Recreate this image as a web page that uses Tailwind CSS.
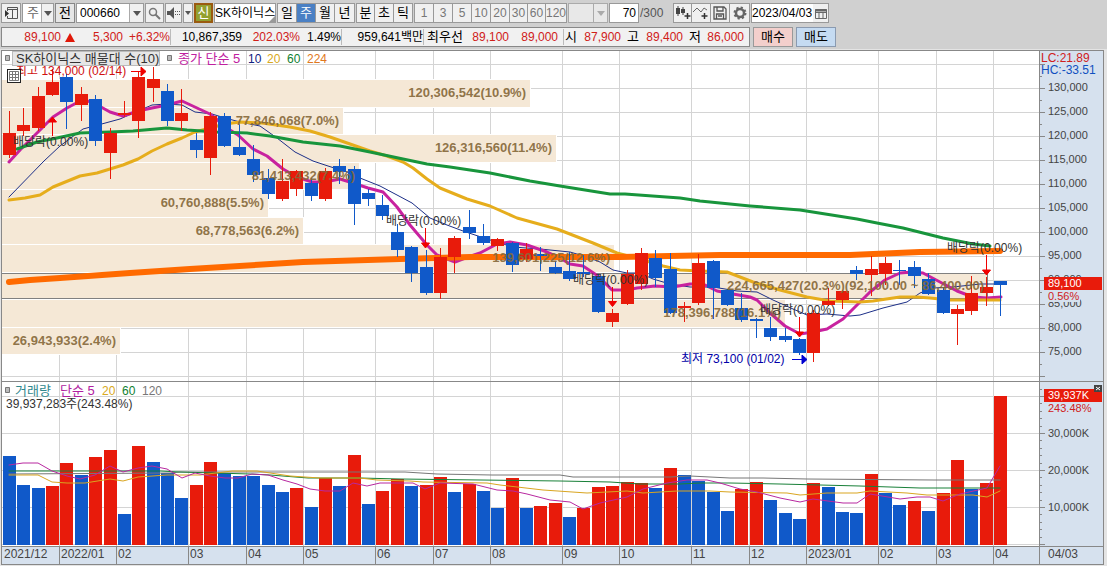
<!DOCTYPE html>
<html lang="ko">
<head>
<meta charset="utf-8">
<title>SK하이닉스 주봉 차트</title>
<script src="https://cdn.jsdelivr.net/npm/@tailwindcss/browser@4"></script>
</head>
<body class="bg-[#d0d0d0] font-['Liberation_Sans','Noto_Sans_CJK_KR',sans-serif] text-[12px] leading-4 text-black">
<header class="flex flex-col gap-1 px-px pt-[3px]">
  <div class="flex h-5 items-stretch gap-px whitespace-nowrap" role="toolbar" aria-label="차트 도구">
    <button aria-label="메뉴" class="grid w-5 place-items-center border border-[#999] bg-[#f0f0f0]">
      <svg width="15" height="14" viewBox="0 0 15 14" fill="none" stroke="#555"><path d="M3.5 5V1.500H13.500V12.500H3.500V10M3.500 3.500H13.500M8.500 3.500V12.500"/><path d="M1 4l4 3.500-4 3.500z" fill="#333" stroke="none"/></svg>
    </button>
    <div class="relative flex w-8 border border-[#999] bg-white">
      <select aria-label="구분" class="w-full appearance-none pl-1 text-[13px] leading-4 text-[#666]"><option>주</option></select>
      <span class="pointer-events-none absolute inset-y-0 right-0 grid w-3 place-items-center border-l border-[#aaa] bg-[#f0f0f0]"><svg width="8" height="5"><path d="M0 0h8L4 5z" fill="#555"/></svg></span>
    </div>
    <button class="w-5 border border-[#888] bg-[#e6e6e6] text-[13px]">전</button>
    <div class="relative flex w-[68px] border border-[#999] bg-white">
      <input aria-label="종목코드" value="000660" class="w-full px-[3px] text-[12px]">
      <span class="absolute inset-y-0 right-0 grid w-[14px] place-items-center border-l border-[#aaa] bg-[#f0f0f0]"><svg width="8" height="5"><path d="M0 0h8L4 5z" fill="#555"/></svg></span>
    </div>
    <button aria-label="검색" class="grid w-[19px] place-items-center border border-[#999] bg-[#f0f0f0]"><svg width="13" height="13" fill="none" stroke="#777" stroke-width="1.500"><circle cx="5" cy="5" r="3.500"/><path d="M7.500 7.500l4.500 4.500" stroke-width="2"/></svg></button>
    <button aria-label="소리" class="grid w-[17px] place-items-center border border-[#999] bg-[#f0f0f0]"><svg width="13" height="12"><path d="M0 4h3l4-4v12L3 8H0z" fill="#555"/><path d="M8 4h1v1H8zM8 7h1v1H8zM10 4h1v1h-1zM10 7h1v1h-1zM12 4h1v1h-1zM12 7h1v1h-1z" fill="#555"/></svg></button>
    <button aria-label="소리 옵션" class="grid w-[10px] place-items-center border border-[#999] bg-[#f0f0f0]"><svg width="6" height="4"><path d="M0 0h6L3 4z" fill="#555"/></svg></button>
    <button class="w-[19px] border-2 border-[#9a5a10] bg-[#92a030] text-[13px] leading-4 text-white">신</button>
    <div class="relative flex w-[62px] items-center overflow-hidden border border-[#999] bg-white">
      <input aria-label="종목명" value="SK하이닉스" class="w-20 shrink-0 text-[12px]">
      <svg class="absolute right-0 bottom-0" width="6" height="6"><path d="M6 0v6H0z" fill="#999"/></svg>
    </div>
    <div class="flex divide-x divide-[#999] border border-[#999] bg-[#f0f0f0] text-[13px]">
      <button class="w-[19px]">일</button><button class="w-[19px] bg-[#4a80c4] text-white">주</button><button class="w-[19px]">월</button><button class="w-[19px]">년</button>
    </div>
    <div class="flex divide-x divide-[#999] border border-[#999] bg-[#f0f0f0] text-[13px]">
      <button class="w-[18px]">분</button><button class="w-[19px]">초</button><button class="w-[18px]">틱</button>
    </div>
    <div class="flex divide-x divide-[#999] border border-[#999] bg-[#f0f0f0] text-[#777]">
      <button class="w-[19px]">1</button><button class="w-[19px]">3</button><button class="w-[19px]">5</button><button class="w-[19px]">10</button><button class="w-[19px]">20</button><button class="w-[18px]">30</button><button class="w-[18px]">60</button><button class="w-[20px]">120</button>
    </div>
    <div class="relative flex w-10 border border-[#aaa] bg-[#e8e8e8]">
      <select aria-label="분 주기" disabled class="w-full appearance-none"><option></option></select>
      <span class="pointer-events-none absolute inset-y-0 right-0 grid w-[14px] place-items-center border-l border-[#aaa]"><svg width="8" height="5"><path d="M0 0h8L4 5z" fill="#aaa"/></svg></span>
    </div>
    <label class="flex items-center gap-px"><input aria-label="표시 봉 수" value="70" class="h-5 w-[30px] border border-[#999] bg-white pr-[2px] text-right text-[12px]"><span class="w-8 text-[#555]">/300</span></label>
    <div class="flex divide-x divide-[#999] border border-[#999] bg-[#f0f0f0]">
      <button aria-label="봉 추가" class="grid w-[18px] place-items-center"><svg width="16" height="14"><path d="M3 0v10M8 1v8" stroke="#444"/><path d="M1 2h4v6H1zM6 3h4v4H6z" fill="#444"/><path d="M12.500 7v6M9.500 10h6" stroke="#333" stroke-width="1.500"/></svg></button>
      <button aria-label="지표 추가" class="grid w-[19px] place-items-center"><svg width="16" height="14" fill="none" stroke="#666"><path d="M0 6l4-4 4 4 3-4 3 2"/><path d="M11.500 7v6M8.500 10h6" stroke="#333" stroke-width="1.500"/></svg></button>
      <button aria-label="저장" class="grid w-[19px] place-items-center"><svg width="14" height="14" fill="none" stroke="#555" stroke-width="1.300"><path d="M1 1h10l2 2v10H1zM4 1v4h6V1M3.500 13V8h7v5M5 10h4"/></svg></button>
      <button aria-label="설정" class="grid w-[19px] place-items-center"><svg width="14" height="14" fill="none" stroke="#666"><circle cx="7" cy="7" r="4" stroke-width="2.500"/><circle cx="7" cy="7" r="5.500" stroke-width="2" stroke-dasharray="2.200 2.120"/></svg></button>
    </div>
    <div class="flex border border-[#999] bg-white"><input aria-label="날짜" value="2023/04/03" class="w-[61px] text-[12px]"><button aria-label="달력" class="grid w-[15px] place-items-center bg-[#f0f0f0]"><svg width="12" height="11" fill="none" stroke="#666"><path d="M.5 1.500h11v9H.5zM.5 4.500h11M4 4.500v6M8 4.500v6"/><path d="M0 2.500h12" stroke-width="2"/></svg></button></div>
  </div>

  <div class="flex h-5 gap-[3px] whitespace-nowrap">
    <div class="flex items-center border border-[#888] bg-[#f1f1f1] text-right text-[#d02018]">
      <span class="w-[59px]">89,100</span><svg class="ml-1" width="10" height="9"><path d="M5 0l5 9H0z" fill="#e01808"/></svg><span class="w-12">5,300</span><span class="w-12 border-r border-[#bbb]">+6.32%</span>
      <span class="w-[71px] text-black">10,867,359</span><span class="w-[58px]">202.03%</span><span class="w-[42px] border-r border-[#bbb] text-black">1.49%</span>
      <span class="w-[82px] border-r border-[#bbb] text-black">959,641백만</span>
      <span class="w-[39px] text-[13px] text-black">최우선</span><span class="w-[46px]">89,100</span><span class="w-[55px] border-r border-[#bbb] pr-[5px]">89,000</span>
      <span class="w-[13px] text-[13px] text-black">시</span><span class="w-11">87,900</span><span class="w-[18px] text-[13px] text-black">고</span><span class="w-11">89,400</span><span class="w-[18px] text-[13px] text-black">저</span><span class="w-12 pr-[5px]">86,000</span>
    </div>
    <button class="w-10 border border-[#999] bg-[#f3cfcc] text-[13px]">매수</button>
    <button class="w-10 border border-[#8a9ab0] bg-[#c5dbf2] text-[13px]">매도</button>
  </div>
</header>

<main class="pt-0.5">
<svg id="chart" class="block h-auto w-full" viewBox="0 49 1107 517" role="img" aria-label="SK하이닉스 주봉 가격 및 거래량">
  <rect y="49" width="1107" height="517" fill="#e4e4e4"/>
  <g shape-rendering="crispEdges">
    <rect x="1" y="50" width="1103" height="515" fill="#888"/>
    <rect x="2" y="51" width="1037" height="330" fill="#fff"/>
    <rect x="2" y="382" width="1037" height="164" fill="#fff"/>
    <rect x="1040" y="51" width="63" height="330" fill="#d6e1ee"/>
    <rect x="1040" y="382" width="63" height="164" fill="#d6e1ee"/>
    <rect x="2" y="547" width="1101" height="17" fill="#d6e1ee"/>
    <g id="grid"></g>
    <g id="bands" fill="#f5e8d6"></g>
    <path d="M2 273.500H987V298.500H2" fill="none" stroke="#808080"/>
  </g>
  <g id="volume" shape-rendering="crispEdges"></g>
  <g id="averages" fill="none" stroke-linejoin="round" stroke-linecap="round"></g>
  <g id="candles" shape-rendering="crispEdges"></g>
  <g id="bandText" fill="#86693a" fill-opacity=".92" font-weight="bold" font-size="13" text-anchor="end"></g>

  <g id="arrows" fill="#f00000" stroke="#f00000">
    <path d="M52.500 117l4 5h-8zM52.500 122v14"/>
    <path d="M425.500 228v15M421.500 243h8l-4 5z"/>
    <path d="M612.500 287v15M608.500 301.500h8l-4 5z"/>
    <path d="M799.500 317v15M795.500 332h8l-4 5z"/>
    <path d="M986.500 255v15M982.500 270h8l-4 5z"/>
    <path d="M131 71.500h10M141 67l5 4.500-5 4.500z"/>
    <path d="M792 359.500h10M802 355l5 4.500-5 4.500z" fill="#0000d0" stroke="#0000d0"/>
  </g>
  <g font-size="12" fill="#333">
    <text x="13" y="146">배당락(0.00%)</text>
    <text x="386" y="225">배당락(0.00%)</text>
    <text x="573" y="284">배당락(0.00%)</text>
    <text x="760" y="314">배당락(0.00%)</text>
    <text x="947" y="252">배당락(0.00%)</text>
    <text x="16" y="75" fill="#d01010">최고 134,000 (02/14)</text>
    <text x="681" y="363" fill="#0000a8">최저 73,100 (01/02)</text>
    <text x="6" y="408">39,937,283주(243.48%)</text>
  </g>
  <rect x="7.500" y="69.500" width="13" height="13" fill="#fff" stroke="#222"/>
  <path d="M9.500 71.500h9v9h-9zM9.500 74.500h9M9.500 77.500h9M12.500 71.500v9M15.500 71.500v9" fill="none" stroke="#777"/>

  <g font-size="13">
    <rect x="12.500" y="51.500" width="147" height="14" fill="#e6e6e6" stroke="#bbb"/>
    <path d="M5.500 55.500h4v5h-4zM167.500 55.500h4v5h-4zM5.500 387.500h4v5h-4z" fill="#bbb" stroke="#777"/>
    <text x="16" y="63" fill="#333">SK하이닉스 매물대 수(10)</text>
    <text x="178" y="63" fill="#c020a0">종가 단순 5</text>
    <text x="15" y="395" fill="#30888e">거래량</text>
    <text x="60" y="395" fill="#b020a0">단순 5</text>
  </g>
  <g font-size="12">
    <text x="248" y="63" fill="#102080">10</text><text x="267" y="63" fill="#d8a820">20</text><text x="287" y="63" fill="#108030">60</text><text x="307" y="63" fill="#e07820">224</text>
    <text x="102" y="395" fill="#d8a820">20</text><text x="122" y="395" fill="#108030">60</text><text x="142" y="395" fill="#777">120</text>
    <text x="1041" y="62" fill="#d02020">LC:21.89</text><text x="1041" y="74" fill="#1050c0">HC:-33.51</text>
  </g>
  <g id="axis" fill="#444"></g>
  <g font-size="11">
    <rect x="1044" y="277" width="58" height="13" fill="#e81b0b"/><text x="1048" y="287" fill="#fff">89,100</text>
    <rect x="1046" y="290" width="34" height="12" fill="#d6e1ee"/><text x="1048" y="300" fill="#d02020">0.56%</text>
    <rect x="1044" y="389" width="58" height="13" fill="#e81b0b"/><text x="1048" y="399" fill="#fff">39,937K</text>
    <text x="1048" y="412" fill="#d02020">243.48%</text>
    <rect x="1094" y="385" width="8" height="7" fill="#444"/><path d="M1096 387l4 3M1100 387l-4 3" stroke="#fff"/>
  </g>
</svg>
</main>

<script>
const RED = '#e81b0b', BLUE = '#1059c9';
const put = (id, html) => { document.getElementById(id).innerHTML = html; };
const months = [[4,'2021/12'],[60,'2022/01'],[117,'02'],[189,'03'],[247,'04'],[304,'05'],[376,'06'],[434,'07'],[491,'08'],[563,'09'],[620,'10'],[692,'11'],[750,'12'],[807,'2023/01'],[879,'02'],[937,'03'],[994,'04']];
const priceY = k => 232 + (100 - k) * 4.81;

let grid = '', axis = '';
for (let k = 135; k >= 70; k -= 5) {
  const y = Math.round(priceY(k));
  grid += `<rect x="2" y="${y}" width="1037" height="1" fill="#d4d4d4"/><rect x="1040" y="${y}" width="5" height="1" fill="#888"/>`;
  if (k > 70) grid += `<rect x="1040" y="${y + 12}" width="2" height="1" fill="#888"/>`;
  if (k < 135 && k > 70) axis += `<text x="1048" y="${y + 3}" font-size="11">${k},000</text>`;
}
for (let v = 0; v <= 40; v += 10) {
  const y = Math.round(544 - v * 3.7);
  grid += `<rect x="2" y="${y}" width="1037" height="1" fill="#d4d4d4"/>`;
  if (v > 0 && v < 40) axis += `<text x="1048" y="${y + 4}" font-size="11">${v},000K</text>`;
}
for (let j = 0; j <= 21; j++) grid += `<rect x="1040" y="${Math.round(544 - j * 7.4)}" width="${j % 5 ? 2 : 5}" height="1" fill="#888"/>`;
months.forEach(([x, t], i) => {
  if (i) grid += `<rect x="${x - 1}" y="51" width="1" height="330" fill="#d4d4d4"/><rect x="${x - 1}" y="382" width="1" height="164" fill="#d4d4d4"/><rect x="${x - 1}" y="546" width="1" height="18" fill="#888"/>`;
  axis += `<text x="${i ? x + 1 : x}" y="558" font-size="12">${t}</text>`;
});
grid += '<rect x="1039" y="546" width="1" height="18" fill="#888"/>';
axis += '<text x="1048" y="558" font-size="12">04/03</text>';
put('grid', grid);
put('axis', axis);

/* volume-by-price: top, bottom, right edge, text end, text */
const bands = [[80,107,530,526,'120,306,542(10.9%)'],[108,134,343,339,'77,846,068(7.0%)'],[135,162,556,552,'126,316,560(11.4%)'],[163,189,359,355,'81,413,432(7.4%)'],[190,217,268,264,'60,760,888(5.5%)'],[218,244,303,299,'68,778,563(6.2%)'],[245,272,614,610,'139,601,225(12.6%)'],[273,299,987,984,'224,665,427(20.3%)(92,100.00 ~ 86,400.00)'],[300,327,785,781,'178,396,788(16.1%)'],[328,354,120,116,'26,943,933(2.4%)']];
put('bands', bands.map(b => `<rect x="2" y="${b[0] - 1}" width="${b[2] - 1}" height="${b[1] - b[0] + 2}" fill="#fff"/><rect x="2" y="${b[0]}" width="${b[2] - 2}" height="${b[1] - b[0]}"/>`).join(''));
put('bandText', bands.map(b => `<text x="${b[3]}" y="${b[0] + 17}">${b[4]}</text>`).join(''));

/* weekly candles: direction, high, body top, body bottom, low, volume top */
const weeks = `R 111 133 155 158 456b|R 108 125 131 136 485b|R 87 96 128 131 488b|R 69 82 95 96 486|B 74 77 102 129 463r|R 87 94 105 121 475b|B 95 99 141 146 457r|R 128 133 153 179 450|R 101 113 115 117 514b|R 72 77 121 138 446|R 67 79 88 102 462b|B 84 91 121 126 473|R 89 113 121 131 498b|B 133 140 150 158 485r|R 112 116 158 175 462|B 113 116 146 147 473|B 124 147 155 156 476|B 145 159 175 182 476|B 169 178 194 199 485|R 159 181 199 201 492b|R 170 171 189 196 488|B 178 183 196 201 507|R 168 171 199 201 478|B 159 166 172 184 486|B 166 169 204 225 455r|B 189 193 199 206 504|B 195 205 216 220 491r|B 224 232 250 257 479r|B 246 247 273 282 486|B 250 267 293 295 485r|R 248 257 293 299 477|R 236 238 257 273 492b|B 210 227 233 239 484r|B 224 236 243 245 491|R 238 239 246 251 508b|B 242 243 265 272 478r|R 243 249 259 262 508b|B 247 254 256 271 506r|B 261 267 273 274 503r|B 252 271 279 281 517|B 255 272 274 277 508r|B 274 276 312 313 487r|R 309 313 322 327 486|R 270 274 304 305 482|R 248 253 284 290 483|B 250 258 278 287 488|B 253 269 313 314 468r|R 302 306 308 322 475b|R 254 263 303 305 481b|B 260 261 288 319 492|B 289 290 305 306 511|B 293 308 320 322 489r|B 318 319 321 338 482r|B 317 328 337 341 500|B 328 336 340 342 513|B 338 339 353 355 519|R 310 313 353 362 483|R 288 301 305 306 487b|R 290 291 300 309 512b|B 266 270 274 280 513|R 256 269 275 296 474|R 257 263 274 285 493b|B 260 270 271 285 505|B 261 267 276 288 501r|B 273 279 294 295 511|B 288 290 313 314 493r|R 305 309 314 345 460|R 276 293 311 315 489b|R 277 287 293 306 483|B 281 281 285 316 396r`.split('|');
let candles = '', volume = '';
weeks.forEach((w, i) => {
  const [d, h, t, b, l, v] = w.split(' ');
  const x = Math.round(3 + i * 991 / 69), c = d === 'R' ? RED : BLUE, top = parseInt(v);
  candles += `<rect x="${x + 6}" y="${h}" width="1" height="${l - h}" fill="${c}"/><rect x="${x}" y="${t}" width="13" height="${b - t}" fill="${c}"/>`;
  const vc = v.endsWith('r') ? RED : v.endsWith('b') ? BLUE : c;
  volume += `<rect x="${x}" y="${top}" width="13" height="${545 - top}" fill="${vc}"/>`;
});
put('candles', candles);
put('volume', volume);

const lines = [
 ['#1c2f88',1,'9,197 44,161 60,146 83,129 98,125 120,119 138,111 152,105 167,104 182,105 195,112 212,114 225,118 240,122 260,126 277,138 295,152 313,161 328,166 347,172 360,178 380,186 397,195 412,203 430,218 447,225 463,231 487,239 513,247 540,249 570,252 587,257 600,262 613,270 627,273 640,273 653,279 670,284 690,287 713,287 737,291 757,292 773,300 793,309 807,315 827,314 850,316 860,315 883,308 907,302 920,293 933,288 953,287 980,284 1003,284'],
 ['#c8229f',3,'9,162 20,150 38,132 53,117 67,108 82,100 92,102 110,112 123,116 138,111 152,108 167,105 182,101 197,108 210,114 230,130 238,135 253,149 267,156 283,169 297,177 312,182 325,182 340,179 353,183 368,188 383,192 397,207 410,225 427,245 437,255 455,262 468,257 480,253 497,244 510,242 527,245 547,252 560,258 570,264 583,266 598,276 612,290 627,290 637,288 655,286 673,287 690,284 703,284 717,291 733,294 750,297 757,300 770,313 785,326 800,334 813,332 827,329 843,319 857,305 870,292 885,280 900,273 912,272 923,273 940,282 957,291 973,297 987,298 1001,297'],
 ['#e6ad1c',3,'9,200 25,198 40,195 53,187 80,176 97,173 123,165 138,159 152,151 167,144 182,138 195,132 225,124 240,122 262,123 290,127 310,131 330,137 350,144 370,151 387,156 403,162 413,168 427,179 440,188 467,199 490,206 517,218 557,229 593,243 617,253 640,259 663,266 680,270 700,271 727,272 753,282 780,290 807,297 830,301 860,302 873,301 900,297 917,297 930,298 950,300 1000,300'],
 ['#18953c',3,'17,149 37,142 57,138 80,133 110,132 133,131 167,128 187,130 217,132 247,133 270,136 303,142 340,146 370,152 403,159 427,164 450,167 490,173 530,181 560,186 610,194 625,194 680,198 700,201 750,206 800,210 857,219 877,223 903,228 943,238 973,244 990,246'],
 ['#ff6a00',6,'9,282 30,280 60,278 130,273 190,269 303,262 400,259 470,257 620,257 720,255 850,255 920,252 1000,251'],
 ['#777',1,'9,474 170,473 180,472 370,472 405,472 437,474 492,475 560,475 573,477 670,477 690,476 730,478 763,478 807,479 933,480 1000,480'],
 ['#188038',1,'9,471 160,471 180,472 250,474 270,475 308,478 360,478 400,479 560,481 610,482 640,484 680,484 700,483 730,483 780,484 820,485 860,486 920,488 1000,488'],
 ['#d9a520',1,'9,475 38,475 52,482 67,483 85,483 110,479 123,481 138,477 167,475 200,475 232,471 257,471 290,476 320,478 360,478 377,480 410,481 423,482 487,483 500,485 543,490 587,493 627,491 643,493 677,491 710,491 730,492 787,493 800,495 827,493 857,493 870,491 907,493 927,495 973,495 987,497 1000,491'],
 ['#b828a0',1,'9,465 23,463 38,463 52,471 67,476 80,479 95,475 110,466 123,472 138,468 152,466 167,469 182,478 195,473 210,476 225,478 238,478 252,474 268,475 283,480 297,484 310,489 325,491 340,491 353,483 367,486 380,483 413,483 425,489 440,483 473,484 497,490 513,491 527,494 550,500 570,502 583,509 600,503 627,497 643,489 667,483 687,480 707,480 720,483 740,489 757,492 780,498 800,502 813,499 843,503 857,503 870,494 900,499 917,497 930,497 943,501 960,494 987,488 1000,466']
];
put('averages', lines.map(([c, w, p]) => `<polyline points="${p}" stroke="${c}" stroke-width="${w}"/>`).join(''));
</script>
</body>
</html>
